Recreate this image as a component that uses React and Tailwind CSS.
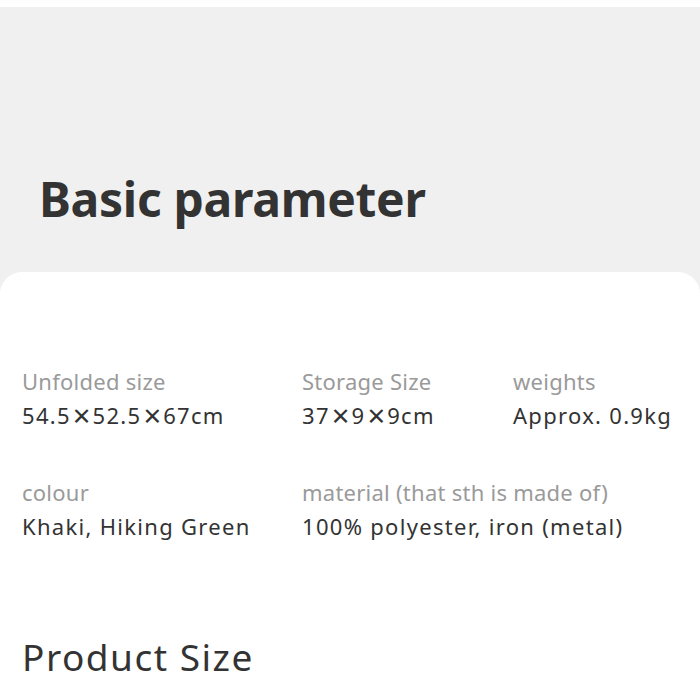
export default function App() {
  const font = { fontFamily: '"Noto Sans", "Open Sans", sans-serif' };
  const label = "text-[22px] leading-[34px] tracking-[0.25px] text-[#9a9a9a]";
  const value = "text-[22px] leading-[34px] tracking-[1.3px] text-[#333333]";
  const X = () => <span className="text-[31px] leading-[0] tracking-[0px] align-[-3px] mx-[2px]">×</span>;
  return (
    <div className="w-[700px] h-[700px] bg-white overflow-hidden" style={font}>
      <div className="mt-[7px] bg-[#f0f0f0]">
        <div className="h-[265px] pl-[39px] pt-[160px]">
          <h1 className="text-[48px] leading-[64px] font-bold text-[#333333] tracking-[-0.3px]">Basic parameter</h1>
        </div>
        <div className="bg-white rounded-t-[22px] pt-[92px] pl-[22px] h-[430px]">
          <div className="grid grid-cols-[280px_211px_1fr] gap-y-[43px]">
            <div>
              <div className={label}>Unfolded size</div>
              <div className={value}>54.5<X />52.5<X />67cm</div>
            </div>
            <div>
              <div className={label}>Storage Size</div>
              <div className={value}>37<X />9<X />9cm</div>
            </div>
            <div>
              <div className={label}>weights</div>
              <div className={value}>Approx. 0.9kg</div>
            </div>
            <div>
              <div className={label}>colour</div>
              <div className={value}>Khaki, Hiking Green</div>
            </div>
            <div className="col-span-2">
              <div className={label}>material (that sth is made of)</div>
              <div className={value}>100% polyester, iron (metal)</div>
            </div>
          </div>
          <h2 className="mt-[90px] text-[37px] leading-[48px] tracking-[1.5px] text-[#333333]">Product Size</h2>
        </div>
      </div>
    </div>
  );
}
